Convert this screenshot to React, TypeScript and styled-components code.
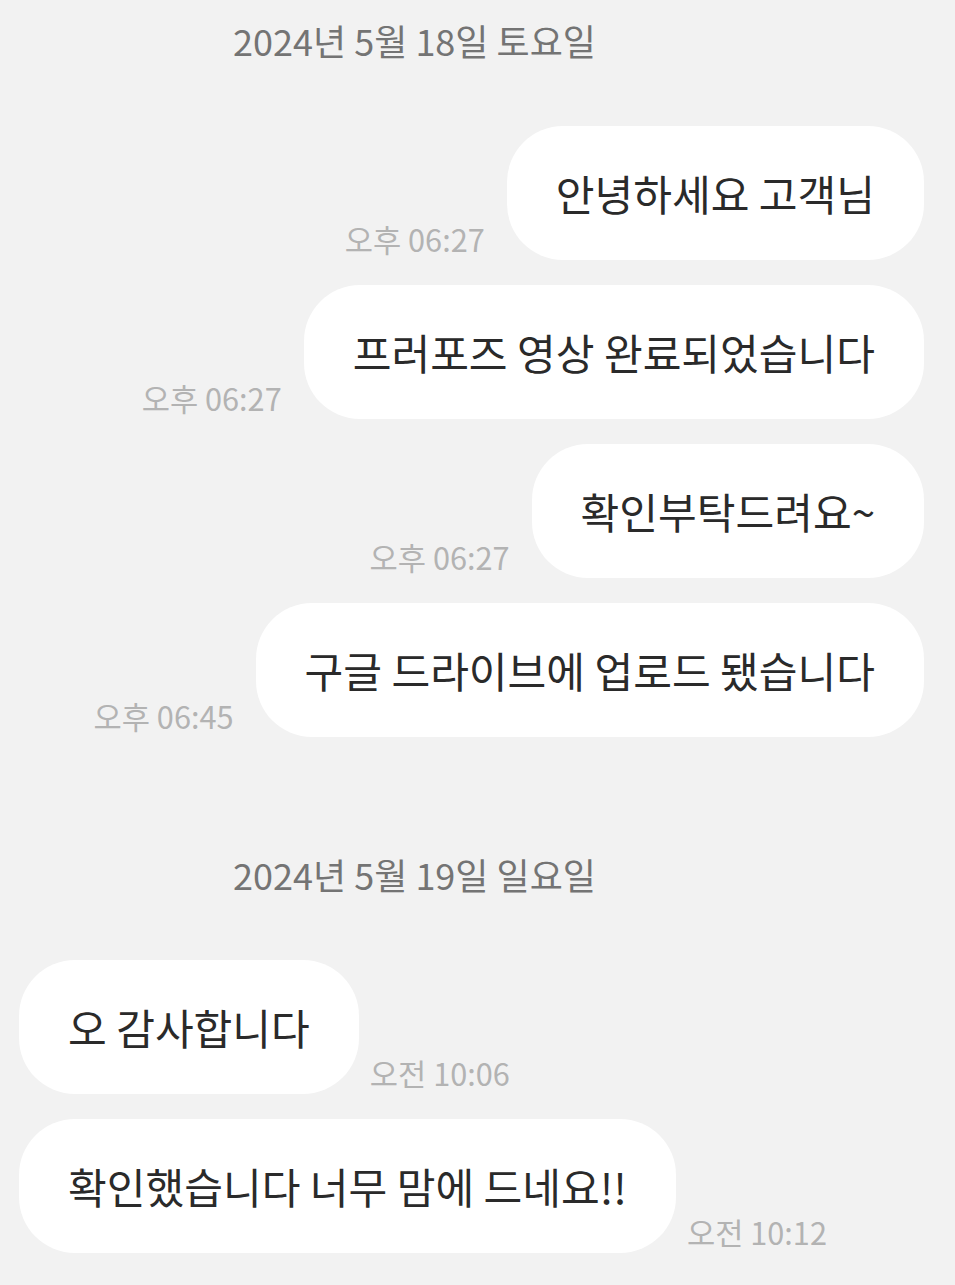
import React from 'react';
import styled, { createGlobalStyle } from 'styled-components';

type Message = {
  text: string;
  time: string;
  mine: boolean;
};

type Day = {
  date: string;
  messages: Message[];
};

const days: Day[] = [
  {
    date: '2024년 5월 18일 토요일',
    messages: [
      { text: '안녕하세요 고객님', time: '오후 06:27', mine: true },
      { text: '프러포즈 영상 완료되었습니다', time: '오후 06:27', mine: true },
      { text: '확인부탁드려요~', time: '오후 06:27', mine: true },
      { text: '구글 드라이브에 업로드 됐습니다', time: '오후 06:45', mine: true },
    ],
  },
  {
    date: '2024년 5월 19일 일요일',
    messages: [
      { text: '오 감사합니다', time: '오전 10:06', mine: false },
      { text: '확인했습니다 너무 맘에 드네요!!', time: '오전 10:12', mine: false },
    ],
  },
];

const GlobalStyle = createGlobalStyle`
  html, body {
    margin: 0;
    padding: 0;
    background: #f2f2f2;
  }
  body {
    font-family: "Noto Sans CJK KR", "Noto Sans", sans-serif;
  }
`;

const App = () => {
  return (
    <>
      <GlobalStyle />
      <Chat>
        {days.map((day) => (
          <DaySection key={day.date}>
            <DateLabel>{day.date}</DateLabel>
            <MessageList>
              {day.messages.map((m, i) => (
                <Row key={i} $mine={m.mine}>
                  <Bubble>{m.text}</Bubble>
                  <Time>{m.time}</Time>
                </Row>
              ))}
            </MessageList>
          </DaySection>
        ))}
      </Chat>
    </>
  );
};

const Chat = styled.div`
  width: 955px;
  min-height: 1285px;
  box-sizing: border-box;
  padding: 16px 31px 0 19px;
  display: flex;
  flex-direction: column;
  gap: 113px;
`;

const DaySection = styled.section`
  display: flex;
  flex-direction: column;
`;

const DateLabel = styled.div`
  font-size: 36px;
  line-height: 48px;
  color: #747474;
  text-align: center;
  padding-right: 114px;
  margin-bottom: 62px;
`;

const MessageList = styled.div`
  display: flex;
  flex-direction: column;
  gap: 25px;
`;

const Row = styled.div<{ $mine: boolean }>`
  display: flex;
  align-items: flex-end;
  flex-direction: ${(p) => (p.$mine ? 'row-reverse' : 'row')};
  gap: ${(p) => (p.$mine ? '22px' : '11px')};
`;

const Bubble = styled.div`
  background: #ffffff;
  color: #2a2a2a;
  font-size: 42.1px;
  line-height: 56px;
  padding: 39px 49px;
  border-radius: 56px;
  white-space: nowrap;
`;

const Time = styled.span`
  font-size: 30.7px;
  line-height: 30px;
  color: #b3b3b3;
  margin-bottom: 6px;
  white-space: nowrap;
`;

export default App;
